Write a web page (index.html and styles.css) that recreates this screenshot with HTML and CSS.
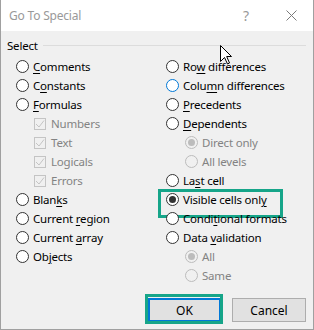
FILE: index.html
```html
<!DOCTYPE html>
<html lang="en">
<head>
  <meta charset="UTF-8" />
  <title>Go To Special</title>
  <link rel="stylesheet" href="styles.css">
</head>
<body>
  <div class="dialog">
    <div class="titlebar">
      <span class="title">Go To Special</span>
      <span class="help">?</span>
      <svg class="close" width="11" height="11" viewBox="0 0 11 11">
        <path d="M0.5 0.5 L10.5 10.5 M10.5 0.5 L0.5 10.5" stroke="#7a7a7a" stroke-width="1" fill="none"/>
      </svg>
    </div>

    <div class="content">
      <div class="group-head">
        <span>Select</span>
        <i class="rule"></i>
      </div>

      <div class="columns">
        <div class="col">
          <div class="opt"><span class="radio"></span><span><u>C</u>omments</span></div>
          <div class="opt"><span class="radio"></span><span>C<u>o</u>nstants</span></div>
          <div class="opt"><span class="radio"></span><span><u>F</u>ormulas</span></div>
          <div class="opt sub disabled"><span class="check"><svg width="10" height="10" viewBox="0 0 10 10"><path d="M1 5 L4 8 L9 1.5" stroke="#c4c4c4" stroke-width="1" fill="none"/></svg></span><span>Numbers</span></div>
          <div class="opt sub disabled"><span class="check"><svg width="10" height="10" viewBox="0 0 10 10"><path d="M1 5 L4 8 L9 1.5" stroke="#c4c4c4" stroke-width="1" fill="none"/></svg></span><span>Text</span></div>
          <div class="opt sub disabled"><span class="check"><svg width="10" height="10" viewBox="0 0 10 10"><path d="M1 5 L4 8 L9 1.5" stroke="#c4c4c4" stroke-width="1" fill="none"/></svg></span><span>Logicals</span></div>
          <div class="opt sub disabled"><span class="check"><svg width="10" height="10" viewBox="0 0 10 10"><path d="M1 5 L4 8 L9 1.5" stroke="#c4c4c4" stroke-width="1" fill="none"/></svg></span><span>Errors</span></div>
          <div class="opt"><span class="radio"></span><span>Blan<u>k</u>s</span></div>
          <div class="opt"><span class="radio"></span><span>Current <u>r</u>egion</span></div>
          <div class="opt"><span class="radio"></span><span>Current <u>a</u>rray</span></div>
          <div class="opt"><span class="radio"></span><span>Ob<u>j</u>ects</span></div>
        </div>

        <div class="col">
          <div class="opt"><span class="radio"></span><span>Ro<u>w</u> differences</span></div>
          <div class="opt"><span class="radio focus"></span><span>Colu<u>m</u>n differences</span></div>
          <div class="opt"><span class="radio"></span><span><u>P</u>recedents</span></div>
          <div class="opt"><span class="radio"></span><span><u>D</u>ependents</span></div>
          <div class="opt sub2 disabled"><span class="radio checked"></span><span>Direct only</span></div>
          <div class="opt sub2 disabled"><span class="radio"></span><span>All levels</span></div>
          <div class="opt"><span class="radio"></span><span>La<u>s</u>t cell</span></div>
          <div class="opt marked"><span class="radio checked"></span><span>Visible cells onl<u>y</u></span></div>
          <div class="opt"><span class="radio"></span><span>Condi<u>t</u>ional formats</span></div>
          <div class="opt"><span class="radio"></span><span>Data <u>v</u>alidation</span></div>
          <div class="opt sub2 disabled"><span class="radio checked"></span><span>All</span></div>
          <div class="opt sub2 disabled"><span class="radio"></span><span>Same</span></div>
        </div>
      </div>

      <div class="buttons">
        <button class="btn default">OK</button>
        <button class="btn">Cancel</button>
      </div>
    </div>

    <svg class="cursor" width="13" height="20" viewBox="0 0 13 20">
      <path d="M0.5 0.5 L0.5 16.5 L4.5 12.5 L7.5 19 L9.5 18 L6.7 11.5 L11.5 11.5 Z" fill="#fff" stroke="#000" stroke-width="1"/>
    </svg>
  </div>
</body>
</html>
```

FILE: styles.css
```css
* {
  margin: 0;
  padding: 0;
  box-sizing: border-box;
}

body {
  font-family: 'Noto Sans', sans-serif;
  font-size: 11.5px;
  letter-spacing: -0.2px;
  color: #000;
  background: #fff;
}

.dialog {
  position: relative;
  width: 314px;
  height: 330px;
  background: #f0f0f0;
  border: 1px solid #a0a0a0;
  border-top: none;
}

.titlebar {
  height: 31px;
  background: #fff;
  display: flex;
  align-items: center;
  padding-left: 8px;
}

.title {
  color: #999;
  font-size: 12px;
  flex: 1;
}

.help {
  color: #999;
  font-size: 14px;
  margin-right: 37px;
}

.close {
  margin-right: 16px;
}

.content {
  padding: 6px 7px 0 6px;
}

.group-head {
  display: flex;
  align-items: center;
  height: 16px;
  gap: 5px;
}

.rule {
  flex: 1;
  height: 1px;
  background: #dcdcdc;
}

.columns {
  display: grid;
  grid-template-columns: 150px 1fr;
  margin: 4px 0 0 9px;
}

.opt {
  position: relative;
  display: flex;
  align-items: center;
  height: 19px;
  gap: 4px;
  white-space: nowrap;
}

.opt u {
  text-decoration-thickness: 1px;
  text-underline-offset: 2px;
}

.opt.sub {
  padding-left: 18px;
  gap: 5px;
}

.opt.sub2 {
  padding-left: 19px;
}

.disabled {
  color: #838383;
}

.radio {
  width: 13px;
  height: 13px;
  border: 1px solid #333;
  border-radius: 50%;
  background: #fff;
  display: flex;
  align-items: center;
  justify-content: center;
  flex: none;
}

.radio.focus {
  border-color: #0078d7;
}

.radio.checked::after {
  content: "";
  width: 7px;
  height: 7px;
  border-radius: 50%;
  background: #333;
}

.disabled .radio {
  border-color: #bcbcbc;
  background: #f0f0f0;
}

.disabled .radio.checked::after {
  background: #bcbcbc;
}

.check {
  width: 12px;
  height: 12px;
  border: 1px solid #c4c4c4;
  display: flex;
  align-items: center;
  justify-content: center;
  flex: none;
}

.marked::before {
  content: "";
  position: absolute;
  left: -8px;
  top: -1px;
  width: 119px;
  height: 23px;
  border: 3px solid #16a589;
}

.buttons {
  display: flex;
  justify-content: flex-end;
  gap: 11px;
  margin-top: 13px;
}

.btn {
  position: relative;
  height: 24px;
  width: 74px;
  font-family: 'Noto Sans', sans-serif;
  font-size: 12px;
  background: #e1e1e1;
  border: 1px solid #adadad;
  color: #000;
}

.btn.default {
  width: 73px;
  border: 2px solid #0078d7;
}

.btn.default::after {
  content: "";
  position: absolute;
  top: -6px;
  left: -5px;
  right: -4px;
  bottom: -4px;
  border: 3px solid #16a589;
}

.cursor {
  position: absolute;
  left: 219px;
  top: 45px;
}
```
